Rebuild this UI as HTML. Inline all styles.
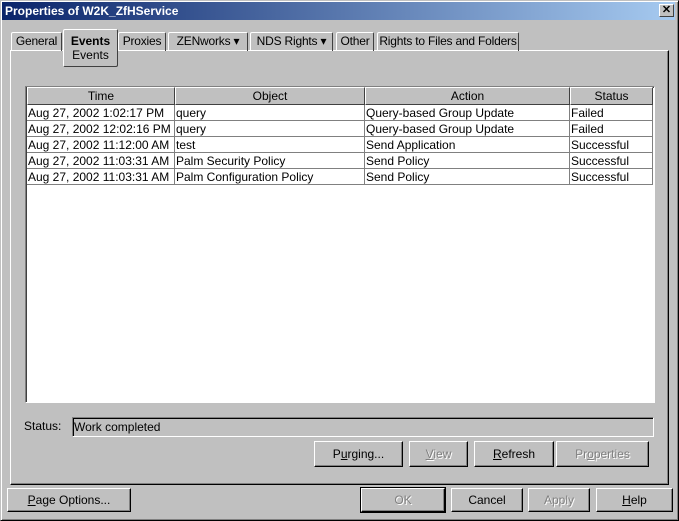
<!DOCTYPE html>
<html><head><style>
*{box-sizing:border-box;margin:0;padding:0}
body{width:679px;height:521px;background:#c0c0c0;font-family:"Liberation Sans",Arial,sans-serif;font-size:12px;color:#000;position:relative;overflow:hidden}
.a{position:absolute;white-space:nowrap}
.title{left:2px;top:2px;width:673px;height:18px;background:linear-gradient(90deg,#0a246a,#a6caf0);color:#fff;font-weight:bold;font-size:12px;line-height:18px;padding-left:3px}
.close{right:5px;top:4px;width:15px;height:13px;background:#c0c0c0;border:1px solid;border-color:#fff #404040 #404040 #fff;color:#000;font-size:11px;line-height:11px;text-align:center;font-weight:bold}
.tab{top:32px;height:19px;border:1px solid;border-color:#fff #404040 transparent #fff;border-bottom:none;line-height:17px;text-align:center;border-radius:2px 2px 0 0;letter-spacing:-0.2px}
.btn{height:26px;border:1px solid;border-color:#fff #000 #000 #fff;box-shadow:inset -1px -1px 0 #808080;text-align:center;line-height:24px}
.dis{color:#808080;text-shadow:1px 1px 0 #fff}
.cell{position:absolute;height:16px;line-height:16px;padding-left:1px;white-space:nowrap;overflow:hidden;border-right:1px solid #808080;border-bottom:1px solid #808080}
.hd{position:absolute;top:0;height:18px;line-height:17px;text-align:center;background:#c0c0c0;border:1px solid;border-color:#fff #404040 #404040 #fff}
u{text-decoration:underline}
</style></head><body>
<div class="a" style="left:0;top:0;width:679px;height:521px;border:1px solid;border-color:#c0c0c0 #000 #000 #c0c0c0;box-shadow:inset 1px 1px 0 #fff,inset -1px -1px 0 #808080"></div>
<div class="a title">Properties of W2K_ZfHService</div>
<div class="a close">✕</div>

<div class="a" style="left:10px;top:50px;width:659px;height:435px;border:1px solid;border-color:#fff #000 #000 #fff;box-shadow:inset -1px -1px 0 #808080"></div>
<div class="a tab" style="left:11px;width:51px">General</div>
<div class="a tab" style="left:118px;width:48px">Proxies</div>
<div class="a tab" style="left:168px;width:80px">ZENworks ▾</div>
<div class="a tab" style="left:250px;width:83px">NDS Rights ▾</div>
<div class="a tab" style="left:336px;width:38px">Other</div>
<div class="a tab" style="left:377px;width:142px">Rights to Files and Folders</div>
<div class="a" style="left:63px;top:29px;width:55px;height:38px;background:#c0c0c0;border:1px solid;border-color:#fff #404040 #404040 #fff;border-radius:2px;text-align:center;line-height:14px;padding-top:4px"><b>Events</b><br>Events</div>

<div class="a" style="left:25px;top:86px;width:630px;height:317px;background:#fff;border:1px solid;border-color:#808080 #fff #fff #808080;box-shadow:inset 1px 1px 0 #404040">
<div class="hd" style="left:1px;width:148px">Time</div>
<div class="hd" style="left:149px;width:190px">Object</div>
<div class="hd" style="left:339px;width:205px">Action</div>
<div class="hd" style="left:544px;width:83px">Status</div>
<div id="rows"></div>
</div>
<script>
var d=[["Aug 27, 2002 1:02:17 PM","query","Query-based Group Update","Failed"],["Aug 27, 2002 12:02:16 PM","query","Query-based Group Update","Failed"],["Aug 27, 2002 11:12:00 AM","test","Send Application","Successful"],["Aug 27, 2002 11:03:31 AM","Palm Security Policy","Send Policy","Successful"],["Aug 27, 2002 11:03:31 AM","Palm Configuration Policy","Send Policy","Successful"]];
var L=[1,149,339,544],W=[148,190,205,83],h="";
d.forEach(function(r,i){r.forEach(function(c,j){h+='<div class="cell" style="top:'+(18+i*16)+'px;left:'+L[j]+'px;width:'+W[j]+'px">'+c+'</div>'})});
document.getElementById("rows").innerHTML=h;
</script>

<div class="a" style="left:24px;top:419px">Status:</div>
<div class="a" style="left:72px;top:417px;width:582px;height:20px;border:1px solid;border-color:#808080 #fff #fff #808080;box-shadow:inset 1px 1px 0 #000;line-height:18px;padding-left:1px">Work completed</div>

<div class="a btn" style="left:314px;top:441px;width:89px">P<u>u</u>rging...</div>
<div class="a btn dis" style="left:409px;top:441px;width:59px"><u>V</u>iew</div>
<div class="a btn" style="left:474px;top:441px;width:80px"><u>R</u>efresh</div>
<div class="a btn dis" style="left:556px;top:441px;width:93px">Pr<u>o</u>perties</div>

<div class="a btn" style="left:7px;top:488px;width:124px;height:24px;line-height:22px"><u>P</u>age Options...</div>
<div class="a btn dis" style="left:361px;top:488px;width:84px;height:24px;line-height:22px;outline:1px solid #000">OK</div>
<div class="a btn" style="left:451px;top:488px;width:72px;height:24px;line-height:22px">Cancel</div>
<div class="a btn dis" style="left:528px;top:488px;width:62px;height:24px;line-height:22px">Apply</div>
<div class="a btn" style="left:596px;top:488px;width:77px;height:24px;line-height:22px"><u>H</u>elp</div>
</body></html>
